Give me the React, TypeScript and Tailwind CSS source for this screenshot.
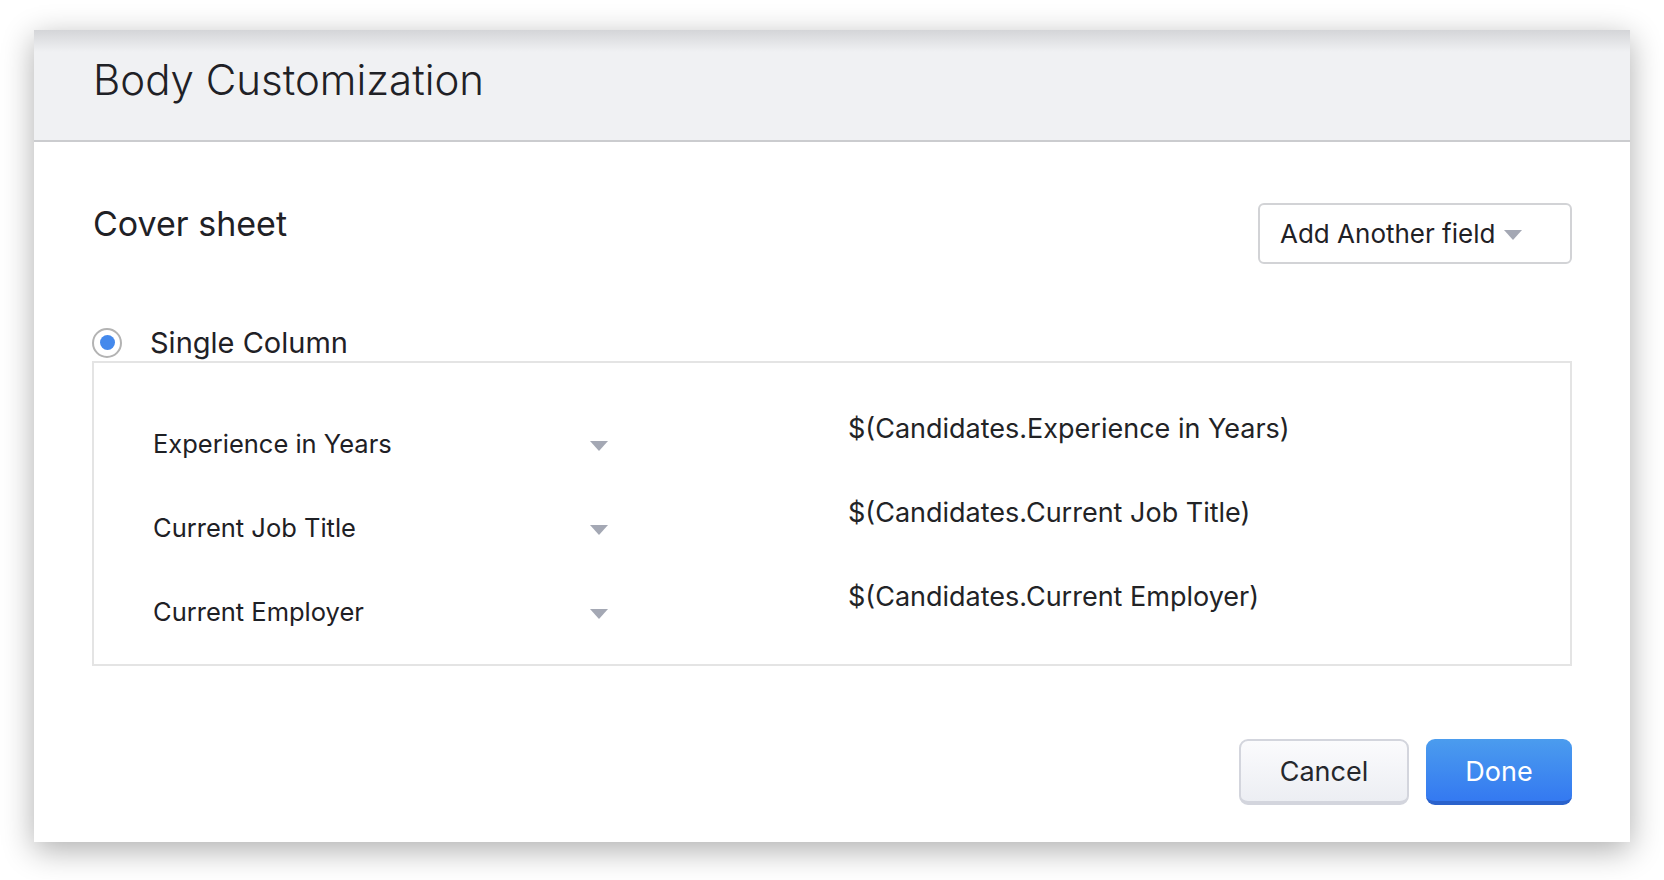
const rows = [
  { label: "Experience in Years", value: "$(Candidates.Experience in Years)" },
  { label: "Current Job Title", value: "$(Candidates.Current Job Title)" },
  { label: "Current Employer", value: "$(Candidates.Current Employer)" },
];

function Caret({ className = "" }: { className?: string }) {
  return (
    <svg width="18" height="10" viewBox="0 0 18 10" className={className}>
      <path d="M0 0h18L9 10z" fill="#a4a8b4" />
    </svg>
  );
}

export default function App() {
  return (
    <div className="h-[880px] w-full bg-white pl-[34px] pt-[30px] font-['Inter','Noto_Sans',sans-serif] text-[#1f2126]">
      <div className="flex h-[812px] w-[1596px] flex-col bg-white shadow-[0_8px_30px_rgba(0,0,0,0.32)]">
        {/* header */}
        <div className="h-[112px] border-b-2 border-[#cbcccf] bg-[linear-gradient(to_bottom,#d4d5d8,#f0f1f3_22px)] pl-[59px] pt-[29px]">
          <h1 className="text-[42px] leading-[42px] font-light">Body Customization</h1>
        </div>

        <div className="pl-[58px] pr-[58px]">
          <div className="flex items-start justify-between pt-[61px]">
            <h2 className="mt-[4px] pl-[1px] text-[34px] leading-[34px] font-normal">Cover sheet</h2>
            <button
              type="button"
              className="flex h-[61px] w-[314px] items-center gap-[9px] rounded-[6px] border-2 border-[#d2d3d6] pl-[20px] text-[26px] leading-[26px]"
            >
              Add Another field
              <Caret className="mt-[2px]" />
            </button>
          </div>

          <label className="mt-[64px] flex h-[29px] items-center gap-[28px]">
            <span className="flex h-[30px] w-[30px] items-center justify-center rounded-full border-2 border-[#b3b3b3]">
              <span className="h-[15px] w-[15px] rounded-full bg-[#4489ec]" />
            </span>
            <span className="text-[29px] leading-[29px]">Single Column</span>
          </label>

          <div className="mt-[4px] h-[305px] border-2 border-[#e4e4e4] pl-[59px] pt-[39px]">
            {rows.map((r) => (
              <div key={r.label} className="flex h-[84px]">
                <div className="flex w-[455px] items-center justify-between">
                  <span className="text-[25.5px] leading-[26px] font-normal text-[#1e2025]">{r.label}</span>
                  <Caret className="mt-[3px]" />
                </div>
                <div className="ml-[240px] pt-[13px] text-[27px] leading-[27px] text-[#222326]">{r.value}</div>
              </div>
            ))}
          </div>

          <div className="mt-[73px] flex justify-end gap-[17px]">
            <button
              type="button"
              className="h-[66px] w-[170px] rounded-[9px] border-2 border-b-4 border-[#d3d5dd] bg-[linear-gradient(to_bottom,#fbfbfd,#eceef3)] pt-[2px] text-[27px] text-[#25272c]"
            >
              Cancel
            </button>
            <button
              type="button"
              className="h-[66px] w-[146px] rounded-[9px] border-b-4 border-[#2a62cc] bg-[linear-gradient(to_bottom,#4b9cee,#3479f1)] pt-[4px] text-[27px] text-white"
            >
              Done
            </button>
          </div>
        </div>
      </div>
    </div>
  );
}
